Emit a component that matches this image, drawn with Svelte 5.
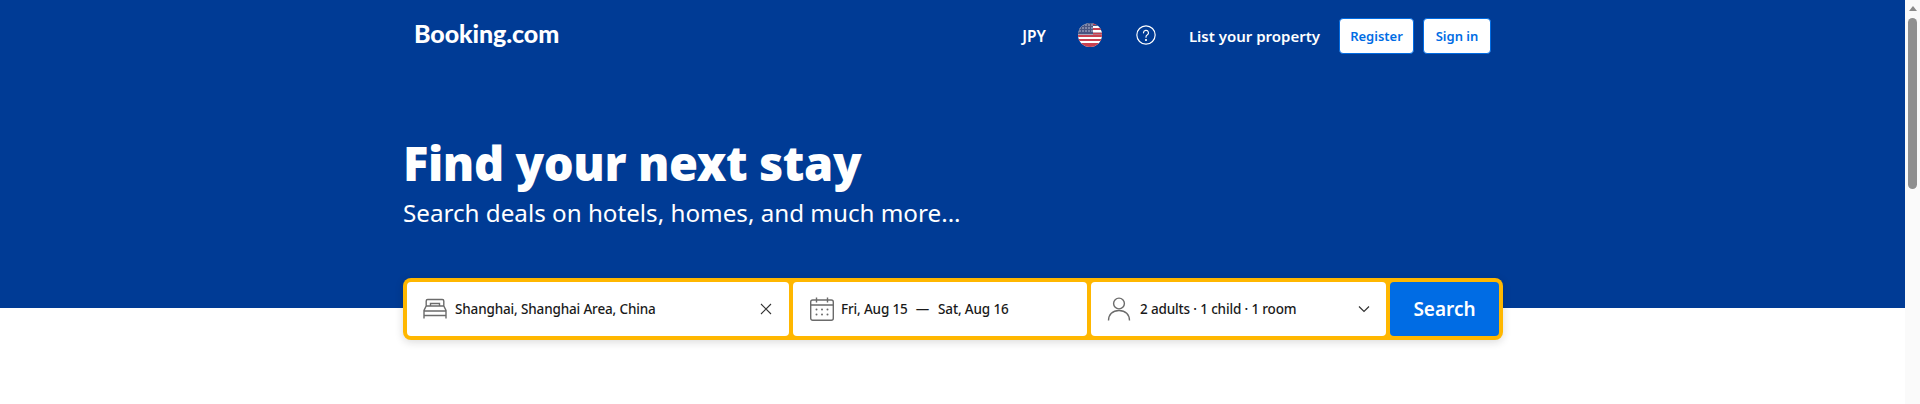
<script>
    const fields = [
        { id: 'place', text: 'Shanghai, Shanghai Area, China' },
        { id: 'dates', text: 'Fri, Aug 15' },
        { id: 'guests', text: '2 adults · 1 child · 1 room' }
    ];
</script>

<div class="page">
    <div class="main">
        <header class="nav">
            <a class="logo" href="#top">Booking.com</a>
            <div class="nav-right">
                <span class="currency">JPY</span>
                <svg class="flag" viewBox="0 0 24 24" aria-label="English (US)">
                    <clipPath id="flag-clip"><circle cx="12" cy="12" r="12" /></clipPath>
                    <g clip-path="url(#flag-clip)">
                        <rect width="24" height="24" fill="#fff" />
                        <path d="M0 12h24v2H0zM0 16h24v2H0zM0 20h24v4H0z" fill="#c8404f" />
                        <rect width="24" height="11.500" fill="#4a5580" />
                        <path d="M15 0h9v2H15zM15 5h9v2H15zM15 9.500h9v2H15z" fill="#c8404f" />
                        <path d="M15 3h9v2H15zM15 7h9v2.500H15z" fill="#fff" />
                        <g fill="#c5c9da">
                            {#each [2, 5, 8] as y}
                                {#each [2, 5, 8, 11, 14] as x}
                                    <circle cx={x} cy={y} r="0.800" />
                                {/each}
                            {/each}
                        </g>
                    </g>
                </svg>
                <svg class="help" viewBox="0 0 24 24" fill="none" stroke="#fff" stroke-width="1.400" aria-label="Help">
                    <circle cx="12" cy="12" r="11" />
                    <path d="M9 9.400a3 3 0 1 1 4.400 2.700c-.9.500-1.400 1.100-1.400 2.200v.400" stroke-linecap="round" />
                    <circle cx="12" cy="18" r="0.600" fill="#fff" />
                </svg>
                <span class="list">List your property</span>
                <button class="auth register">Register</button>
                <button class="auth">Sign in</button>
            </div>
        </header>

        <section class="hero">
            <h1>Find your next stay</h1>
            <p>Search deals on hotels, homes, and much more...</p>
        </section>

        <form class="search" onsubmit={(e) => e.preventDefault()}>
            <div class="field place">
                <svg class="icon" viewBox="0 0 24 24" fill="none" stroke="#6b6b6b" stroke-width="1.400">
                    <path d="M1 21.500v-8L3.200 9h17.600L23 13.500v8M1 14h22M1 18.500h22M3.200 9V4Q3.200 2.500 4.700 2.500h14.600Q20.800 2.500 20.800 4V9M7.500 9V6.500h9V9" />
                </svg>
                <span class="value">{fields[0].text}</span>
                <svg class="clear" viewBox="0 0 12 12" fill="none" stroke="#333" stroke-width="1.100">
                    <path d="M1 1l10 10M11 1L1 11" />
                </svg>
            </div>
            <div class="field dates">
                <svg class="icon" viewBox="0 0 24 24" fill="none" stroke="#6b6b6b" stroke-width="1.400">
                    <rect x="0.700" y="3" width="22.600" height="20.300" rx="2" />
                    <path d="M.6 8h22.800M6.500 .5v5M17.500 .5v5" />
                    <g fill="#6b6b6b" stroke="none">
                        {#each [12.500, 17.500] as y}
                            {#each [6.500, 12, 17.500] as x}
                                <circle cx={x} cy={y} r="1" />
                            {/each}
                        {/each}
                    </g>
                </svg>
                <span class="value">{fields[1].text}</span>
                <span class="value dash">—</span>
                <span class="value">Sat, Aug 16</span>
            </div>
            <div class="field guests">
                <svg class="icon" viewBox="0 0 24 24" fill="none" stroke="#6b6b6b" stroke-width="1.400">
                    <circle cx="12" cy="6.500" r="5.400" />
                    <path d="M1.500 23.500c0-6 4-10 10.500-10s10.500 4 10.500 10" />
                </svg>
                <span class="value">{fields[2].text}</span>
                <svg class="chevron" viewBox="0 0 12 8" fill="none" stroke="#333" stroke-width="1.200">
                    <path d="M1 1.500l5 5 5-5" />
                </svg>
            </div>
            <button class="submit">Search</button>
        </form>
    </div>
    <aside class="scrollbar">
        <span class="arrow"></span>
        <span class="thumb"></span>
    </aside>
</div>

<style>
    :global(body) {
        margin: 0;
        overflow: hidden;
    }

    .page {
        display: flex;
        width: 1920px;
        height: 404px;
        background: #fff;
        font-family: "Noto Sans", "Open Sans", sans-serif;
    }

    .main {
        width: 1905px;
        box-sizing: border-box;
        padding: 0 402px 0 403px;
        background: linear-gradient(#003b95 308px, #fff 308px);
    }

    .nav {
        display: flex;
        justify-content: space-between;
        align-items: center;
        height: 71px;
        padding: 0 12px;
    }

    .logo {
        color: #fff;
        font-family: Lato, sans-serif;
        font-size: 25px;
        font-weight: 900;
        letter-spacing: -0.100px;
        text-decoration: none;
        margin-bottom: 6px;
        margin-left: -1px;
    }

    .nav-right {
        display: flex;
        align-items: center;
        color: #fff;
        font-size: 15px;
        font-weight: 600;
    }

    .currency {
        font-size: 15.500px;
        margin-right: 32px;
    }

    .flag {
        width: 24px;
        height: 24px;
        margin-right: 34px;
        margin-bottom: 2px;
    }

    .help {
        width: 20px;
        height: 20px;
        margin-right: 33px;
        margin-bottom: 2px;
    }

    .list {
        margin-right: 19px;
    }

    .auth {
        height: 36px;
        padding: 0;
        width: 75px;
        border: 1px solid #006ce4;
        border-radius: 4px;
        background: #fff;
        color: #006ce4;
        font: 600 13px "Noto Sans", "Open Sans", sans-serif;
    }

    .register {
        margin-right: 9px;
    }

    .auth:last-child {
        width: 68px;
    }

    .hero {
        padding-top: 61px;
        color: #fff;
    }

    h1 {
        margin: 0;
        font-family: "Noto Sans", sans-serif;
        font-size: 47px;
        font-weight: 900;
        letter-spacing: -0.400px;
        line-height: 62px;
    }

    p {
        margin: 1px 0 0;
        font-size: 24.200px;
        line-height: 36px;
    }

    .search {
        display: flex;
        gap: 4px;
        box-sizing: border-box;
        height: 62px;
        margin-top: 47px;
        padding: 4px;
        border-radius: 8px;
        background: #ffb700;
        box-shadow: 0 2px 8px rgba(26, 26, 26, 0.16);
    }

    .field {
        display: flex;
        align-items: center;
        box-sizing: border-box;
        border-radius: 4px;
        background: #fff;
        padding: 0 16px;
    }

    .place {
        width: 382px;
        padding-right: 17px;
    }

    .dates {
        width: 294px;
        padding-left: 17px;
    }

    .dates .icon {
        margin-right: 7px;
    }

    .guests {
        width: 295px;
    }

    .guests .value {
        margin-left: 1px;
    }

    .icon {
        flex: none;
        width: 24px;
        height: 24px;
        margin-right: 8px;
    }

    .value {
        color: #1a1a1a;
        font-size: 13.500px;
        font-weight: 500;
        letter-spacing: -0.150px;
    }

    .dash {
        margin: 0 9px 0 8px;
    }

    .clear {
        width: 12px;
        height: 12px;
        margin-left: auto;
    }

    .chevron {
        width: 12px;
        height: 8px;
        margin-left: auto;
    }

    .submit {
        flex: 1;
        border: none;
        border-radius: 4px;
        background: #006ce4;
        color: #fff;
        font: 600 19px "Noto Sans", "Open Sans", sans-serif;
    }

    .scrollbar {
        display: flex;
        flex-direction: column;
        align-items: center;
        width: 15px;
        background: #fafafa;
    }

    .arrow {
        width: 0;
        height: 0;
        margin-top: 6px;
        border-left: 4.500px solid transparent;
        border-right: 4.500px solid transparent;
        border-bottom: 5px solid #8a8a8a;
    }

    .thumb {
        width: 9px;
        height: 171px;
        margin-top: 7px;
        border-radius: 4.500px;
        background: #8f8f8f;
    }
</style>
